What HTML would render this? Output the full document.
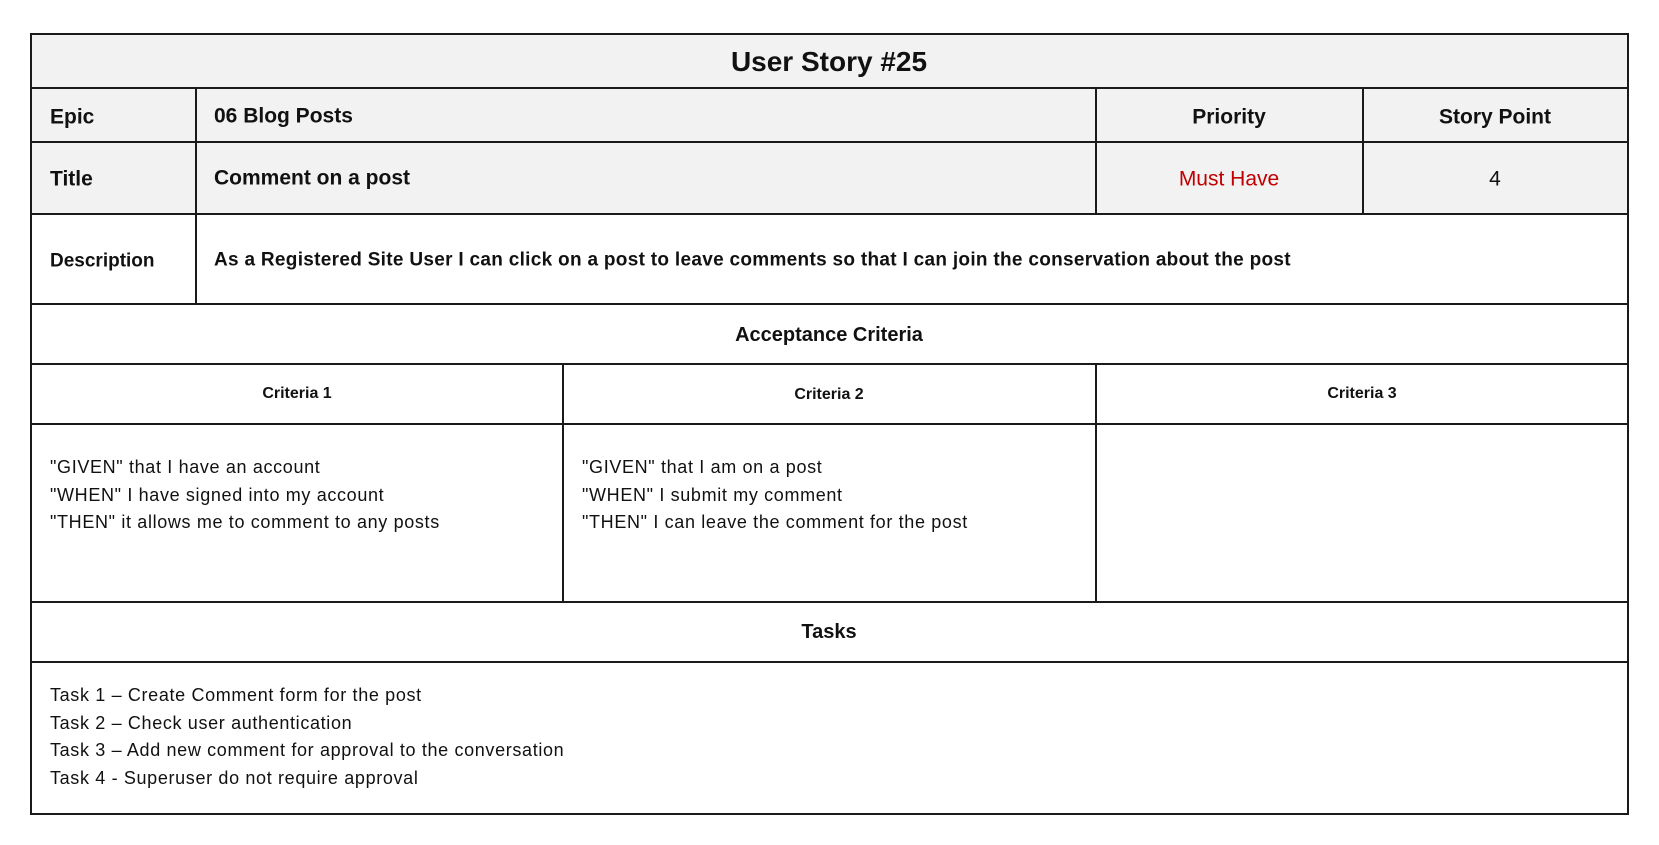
<!DOCTYPE html>
<html><head><meta charset="utf-8"><style>
body{margin:0;width:1659px;height:845px;background:#fff;position:relative;overflow:hidden;font-family:"Liberation Sans",sans-serif;color:#111}
.r{position:absolute;background:#f2f2f2}
.h{position:absolute;height:2px;background:#1a1a1a}
.v{position:absolute;width:2px;background:#1a1a1a}
.t{position:absolute;white-space:nowrap;line-height:1;transform:translateY(-50%)}
.c{transform:translate(-50%,-50%)}
.b{font-weight:bold}
.p{position:absolute;font-size:18px;line-height:27.5px;letter-spacing:0.65px;white-space:nowrap}
</style></head><body>
<div class="r" style="left:31px;top:34px;width:1597px;height:180px"></div>
<div class="h" style="left:30px;top:33px;width:1599px"></div>
<div class="h" style="left:30px;top:87px;width:1599px"></div>
<div class="h" style="left:30px;top:141px;width:1599px"></div>
<div class="h" style="left:30px;top:213px;width:1599px"></div>
<div class="h" style="left:30px;top:303px;width:1599px"></div>
<div class="h" style="left:30px;top:363px;width:1599px"></div>
<div class="h" style="left:30px;top:423px;width:1599px"></div>
<div class="h" style="left:30px;top:601px;width:1599px"></div>
<div class="h" style="left:30px;top:661px;width:1599px"></div>
<div class="h" style="left:30px;top:813px;width:1599px"></div>
<div class="v" style="left:30px;top:33px;height:782px"></div>
<div class="v" style="left:1627px;top:33px;height:782px"></div>
<div class="v" style="left:195px;top:87px;height:218px"></div>
<div class="v" style="left:1095px;top:87px;height:128px"></div>
<div class="v" style="left:1362px;top:87px;height:128px"></div>
<div class="v" style="left:562px;top:363px;height:240px"></div>
<div class="v" style="left:1095px;top:363px;height:240px"></div>

<div class="t c b" style="left:829px;top:62px;font-size:28px">User Story #25</div>
<div class="t b" style="left:50px;top:117px;font-size:21px">Epic</div>
<div class="t b" style="left:214px;top:116px;font-size:21px">06 Blog Posts</div>
<div class="t c b" style="left:1229px;top:117px;font-size:21px">Priority</div>
<div class="t c b" style="left:1495px;top:117px;font-size:21px">Story Point</div>
<div class="t b" style="left:50px;top:179px;font-size:21px">Title</div>
<div class="t b" style="left:214px;top:178px;font-size:21px">Comment on a post</div>
<div class="t c" style="left:1229px;top:179px;font-size:21px;color:#c00000">Must Have</div>
<div class="t c" style="left:1495px;top:179px;font-size:21px">4</div>
<div class="t b" style="left:50px;top:261px;font-size:19px">Description</div>
<div class="t b" style="left:214px;top:260px;font-size:19px;letter-spacing:0.3px">As a Registered Site User I can click on a post to leave comments so that I can join the conservation about the post</div>
<div class="t c b" style="left:829px;top:335px;font-size:20px">Acceptance Criteria</div>
<div class="t c b" style="left:297px;top:394px;font-size:16px">Criteria 1</div>
<div class="t c b" style="left:829px;top:395px;font-size:16px">Criteria 2</div>
<div class="t c b" style="left:1362px;top:394px;font-size:16px">Criteria 3</div>
<div class="p" style="left:50px;top:454px">"GIVEN" that I have an account<br>"WHEN" I have signed into my account<br>"THEN" it allows me to comment to any posts</div>
<div class="p" style="left:582px;top:454px">"GIVEN" that I am on a post<br>"WHEN" I submit my comment<br>"THEN" I can leave the comment for the post</div>
<div class="t c b" style="left:829px;top:632px;font-size:20px">Tasks</div>
<div class="p" style="left:50px;top:682px">Task 1 – Create Comment form for the post<br>Task 2 – Check user authentication<br>Task 3 – Add new comment for approval to the conversation<br>Task 4 - Superuser do not require approval</div>
</body></html>
